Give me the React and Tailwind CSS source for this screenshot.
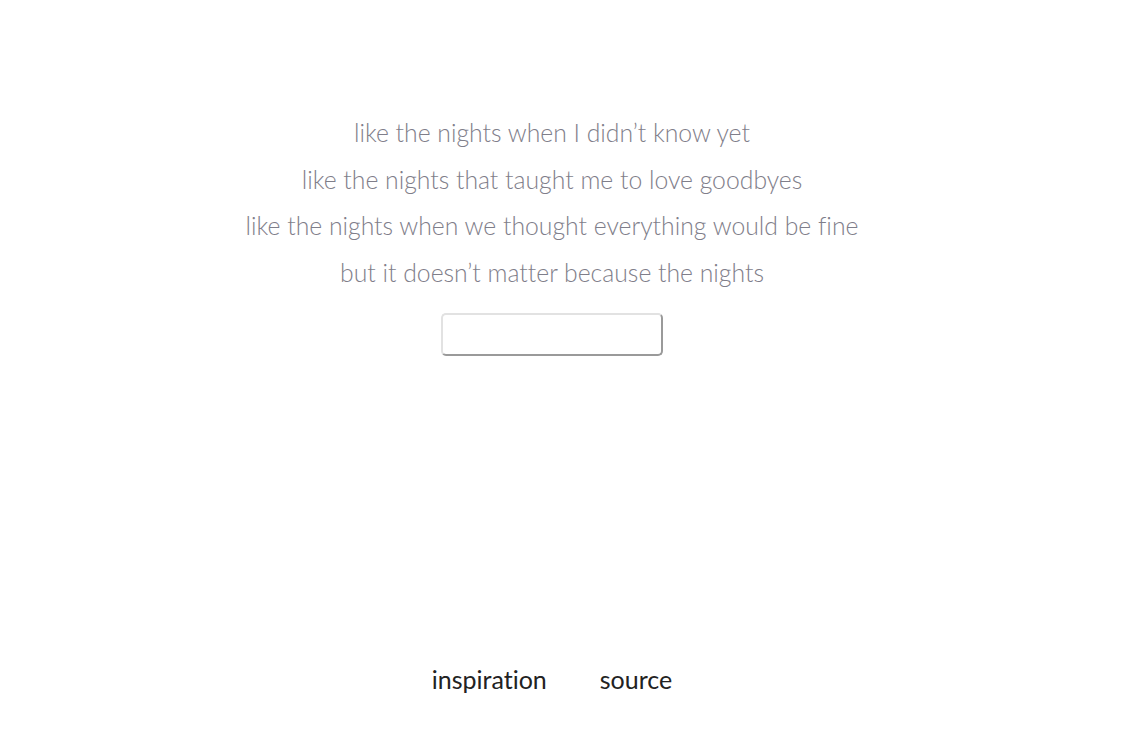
export default function App() {
  const lines = [
    'like the nights when I didn\u2019t know yet',
    'like the nights that taught me to love goodbyes',
    'like the nights when we thought everything would be fine',
    'but it doesn\u2019t matter because the nights',
  ];

  return (
    <div className="w-[1136px] h-[750px] bg-white relative [font-variant-ligatures:none]" style={{ fontFamily: 'Lato, "Open Sans", sans-serif' }}>
      <div className="w-[1104px] flex flex-col items-center pt-[110px]">
        {lines.map((line, i) => (
          <p key={i} className="text-[24.75px] leading-[46.7px] font-light text-[#7f7e8a]">
            {line}
          </p>
        ))}
        <input
          type="text"
          className="mt-[16px] w-[222px] h-[43px] rounded-[5px] border-2 border-t-[#e2e2e2] border-l-[#e2e2e2] border-r-[#9a9a9a] border-b-[#9a9a9a] bg-white outline-none"
        />
      </div>

      {/* Links */}
      <div className="absolute left-0 top-[661px] w-[1104px] flex justify-center gap-[53px] text-[25px] leading-[36px] text-[#222]">
        <a href="#">inspiration</a>
        <a href="#">source</a>
      </div>
    </div>
  );
}
